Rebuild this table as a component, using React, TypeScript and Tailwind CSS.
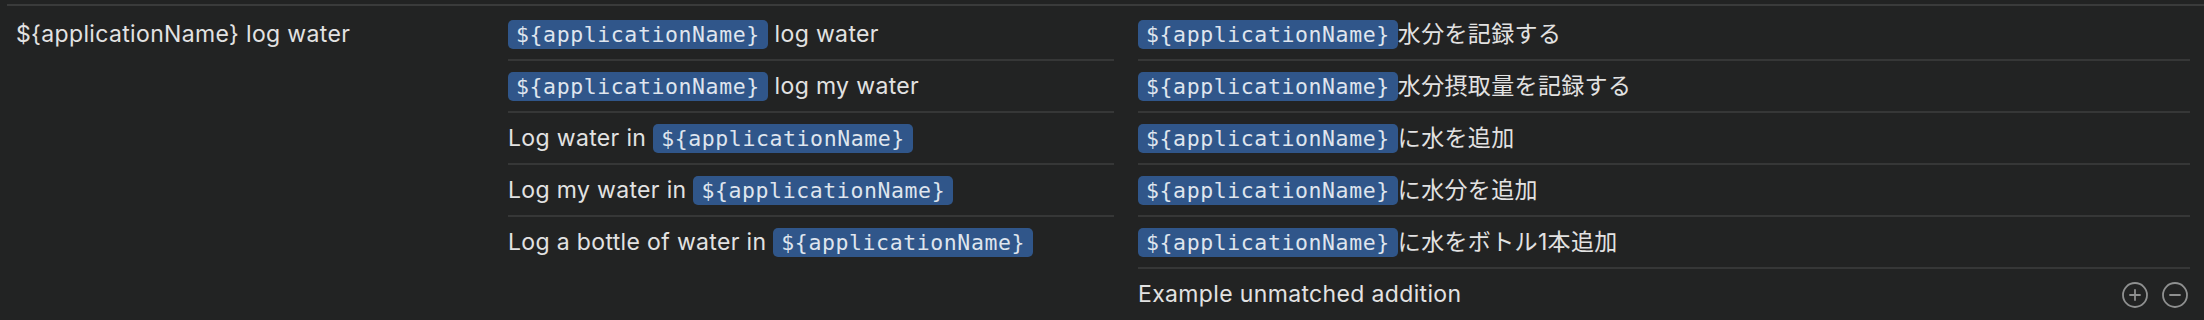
import React from 'react';

type Part = { t: string; token?: boolean };

const Token: React.FC<{ name: string }> = ({ name }) => (
  <span className="inline-flex items-center h-[29px] px-2 rounded-[5px] bg-[#30568a] text-[#dfe5ee] font-['DejaVu_Sans_Mono','Liberation_Mono',monospace] text-[21.5px] tracking-[0.6px] leading-none">
    {name}
  </span>
);

const Phrase: React.FC<{ parts: Part[] }> = ({ parts }) => (
  <div className="flex items-center h-[29px] whitespace-pre">
    {parts.map((p, i) =>
      p.token ? <Token key={i} name={p.t} /> : <span key={i}>{p.t}</span>
    )}
  </div>
);

const Row: React.FC<{ parts: Part[]; divider?: boolean; children?: React.ReactNode }> = ({
  parts,
  divider = true,
  children,
}) => (
  <div>
    <div className="flex items-center justify-between mt-[11px] mb-[10px]">
      <Phrase parts={parts} />
      {children}
    </div>
    {divider && <div className="h-[2px] bg-[#363737]" />}
  </div>
);

const APP = '${applicationName}';

const source: Part[][] = [
  [{ t: APP, token: true }, { t: ' log water' }],
  [{ t: APP, token: true }, { t: ' log my water' }],
  [{ t: 'Log water in ' }, { t: APP, token: true }],
  [{ t: 'Log my water in ' }, { t: APP, token: true }],
  [{ t: 'Log a bottle of water in ' }, { t: APP, token: true }],
];

const translated: Part[][] = [
  [{ t: APP, token: true }, { t: '水分を記録する' }],
  [{ t: APP, token: true }, { t: '水分摂取量を記録する' }],
  [{ t: APP, token: true }, { t: 'に水を追加' }],
  [{ t: APP, token: true }, { t: 'に水分を追加' }],
  [{ t: APP, token: true }, { t: 'に水をボトル1本追加' }],
];

const CircleIcon: React.FC<{ plus?: boolean }> = ({ plus }) => (
  <svg width="26" height="26" viewBox="0 0 26 26" fill="none" stroke="#8f9090" strokeWidth="1.8" strokeLinecap="round">
    <circle cx="13" cy="13" r="12" />
    <line x1="8" y1="13" x2="18" y2="13" />
    {plus && <line x1="13" y1="8" x2="13" y2="18" />}
  </svg>
);

export default function App() {
  return (
    <div className="w-[2204px] h-[320px] bg-[#222323] pt-1 pl-[7px] text-[#e2e2e2] text-[23px] tracking-[0.35px] font-['Inter','Noto_Sans_CJK_JP',sans-serif] overflow-hidden">
      <div className="border-t-2 border-[#3a3b3b] pt-[3px] flex">
        <div className="w-[501px] pl-[9px]">
          <div className="flex items-center h-[29px] mt-[11px]">{APP} log water</div>
        </div>

        <div className="w-[606px]">
          {source.map((parts, i) => (
            <Row key={i} parts={parts} divider={i < source.length - 1} />
          ))}
        </div>

        <div className="w-[1052px] ml-6">
          {translated.map((parts, i) => (
            <Row key={i} parts={parts} />
          ))}
          <Row parts={[{ t: 'Example unmatched addition' }]} divider={false}>
            <div className="flex items-center gap-[14px] pr-[2px]">
              <CircleIcon plus />
              <CircleIcon />
            </div>
          </Row>
        </div>
      </div>
    </div>
  );
}
